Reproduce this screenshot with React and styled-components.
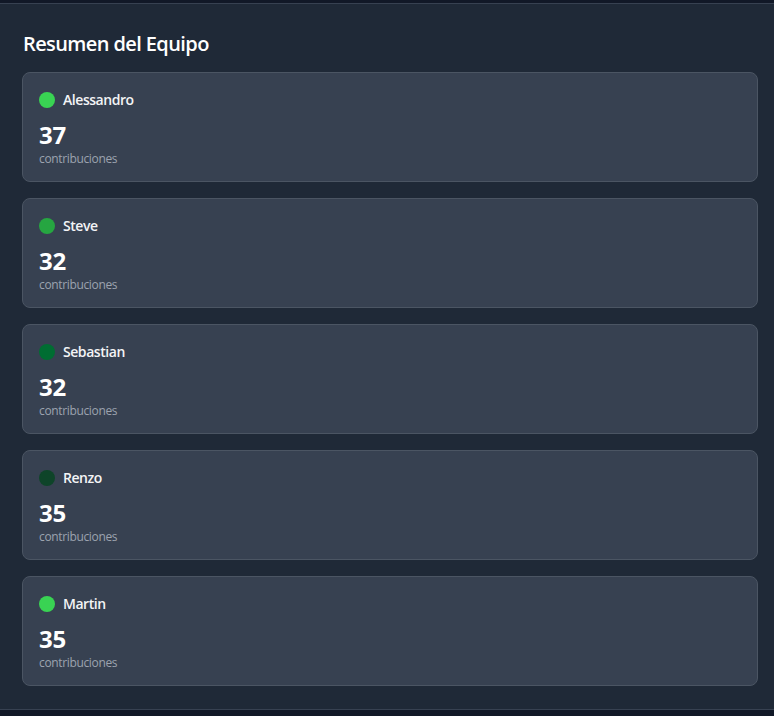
import React from "react";
import styled, { createGlobalStyle } from "styled-components";

const Global = createGlobalStyle`
  html, body { margin: 0; padding: 0; background: #111827; }
  body { font-family: "Open Sans", "Noto Sans", sans-serif; -webkit-font-smoothing: antialiased; }
  * { box-sizing: border-box; }
`;

const Panel = styled.section`
  margin-top: 3px;
  background: #1f2937;
  border-top: 1px solid #374151;
  border-bottom: 1px solid #374151;
  padding: 26px 16px 23px 22px;
`;

const Title = styled.h2`
  margin: 0 0 14px 1px;
  font-size: 20px;
  line-height: 28px;
  font-weight: 600;
  letter-spacing: -0.6px;
  color: #ffffff;
`;

const List = styled.div`
  display: flex;
  flex-direction: column;
  gap: 16px;
`;

const Card = styled.div`
  background: #374151;
  border: 1px solid #4b5563;
  border-radius: 8px;
  padding: 17px 16px 14px;
`;

const NameRow = styled.div`
  display: flex;
  align-items: center;
  gap: 8px;
  margin-bottom: 9px;
`;

const Dot = styled.span`
  width: 16px;
  height: 16px;
  border-radius: 50%;
  background: ${(p) => p.$color};
  flex: none;
`;

const Name = styled.span`
  font-size: 14px;
  line-height: 20px;
  font-weight: 600;
  letter-spacing: -0.45px;
  color: #f3f4f6;
`;

const Count = styled.div`
  font-size: 24px;
  line-height: 32px;
  font-weight: 700;
  letter-spacing: -0.3px;
  color: #ffffff;
`;

const Label = styled.div`
  font-size: 12px;
  line-height: 16px;
  letter-spacing: -0.35px;
  color: #9ca3af;
`;

const members = [
  { name: "Alessandro", count: 37, color: "#39d353" },
  { name: "Steve", count: 32, color: "#26a641" },
  { name: "Sebastian", count: 32, color: "#006d32" },
  { name: "Renzo", count: 35, color: "#0e4429" },
  { name: "Martin", count: 35, color: "#39d353" },
];

export default function App() {
  return (
    <>
      <Global />
      <Panel>
        <Title>Resumen del Equipo</Title>
        <List>
          {members.map((m) => (
            <Card key={m.name}>
              <NameRow>
                <Dot $color={m.color} />
                <Name>{m.name}</Name>
              </NameRow>
              <Count>{m.count}</Count>
              <Label>contribuciones</Label>
            </Card>
          ))}
        </List>
      </Panel>
    </>
  );
}
